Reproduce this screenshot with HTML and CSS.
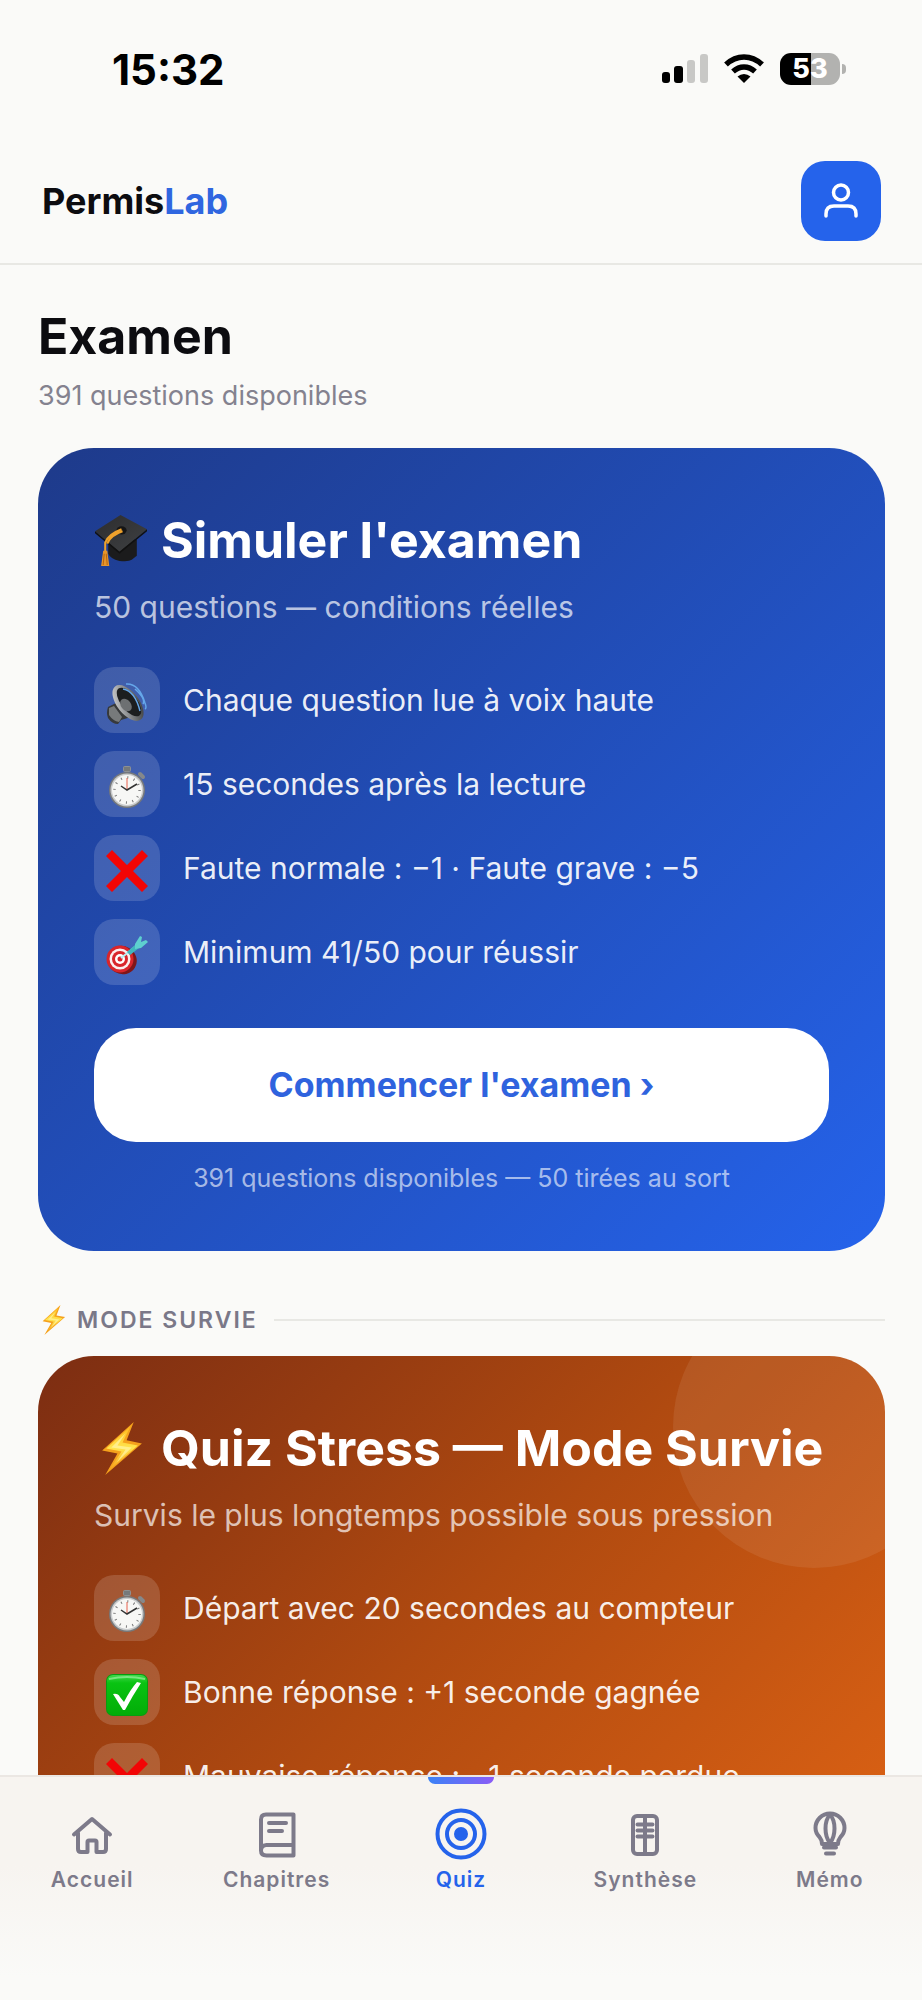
FILE: index.html
```html
<!DOCTYPE html>
<html lang="fr">
<head>
<meta charset="utf-8">
<meta name="viewport" content="width=device-width, initial-scale=1">
<title>PermisLab – Examen</title>
<link rel="stylesheet" href="styles.css">
</head>
<body>
<svg class="defs" aria-hidden="true">
  <defs>
    <linearGradient id="gold" x1="0" y1="0" x2="0" y2="1"><stop offset="0" stop-color="#ffb81c"/><stop offset=".5" stop-color="#ffe44d"/><stop offset="1" stop-color="#f6a01a"/></linearGradient>
    <linearGradient id="board" x1="0" y1="0" x2="1" y2="1"><stop offset="0" stop-color="#2c2c2e"/><stop offset="1" stop-color="#3f4143"/></linearGradient>
    <linearGradient id="metal" x1="0" y1="0" x2="1" y2="1"><stop offset="0" stop-color="#dcdcdc"/><stop offset=".5" stop-color="#85888a"/><stop offset="1" stop-color="#2b2d2e"/></linearGradient>
    <linearGradient id="green" x1="0" y1="0" x2="0" y2="1"><stop offset="0" stop-color="#3fd84a"/><stop offset=".2" stop-color="#09c312"/><stop offset="1" stop-color="#02ad08"/></linearGradient>
    <symbol id="bolt" viewBox="0 0 52 52">
      <path d="M39 0 8 28l15 3L11 52l36-31-15-3z" fill="#f5a11c"/>
      <path d="M36 4 12 26l15 3-12 18 28-24-15-3z" fill="url(#gold)"/>
      <path d="M31 11 17 25l14 2-9 13 15-15-14-2z" fill="#fff3a0" opacity=".75"/>
    </symbol>
    <symbol id="watch" viewBox="0 0 42 42">
      <rect x="17" y="0" width="8" height="6" rx="2" fill="#8d9092"/>
      <path d="M19 1v4M21 1v4M23 1v4" stroke="#5f6264" stroke-width="1"/>
      <path d="m34 8 3 3" stroke="#85888a" stroke-width="4" stroke-linecap="round"/>
      <circle cx="21" cy="24" r="18" fill="#77797b"/>
      <circle cx="21" cy="24" r="16.500" fill="#c9cbcc"/>
      <circle cx="21" cy="24" r="15" fill="#f7f7f5"/>
      <circle cx="21" cy="24" r="12.500" fill="none" stroke="#777" stroke-width="2.500" stroke-dasharray="1 5.540"/>
      <path d="M21 24V12" stroke="#e8604c" stroke-width="1"/>
      <path d="m15 20 6 4 10-6" fill="none" stroke="#333" stroke-width="1.500"/>
    </symbol>
    <symbol id="cross" viewBox="0 0 42 42">
      <path d="m0 6 6-6 15 15L36 0l6 6-15 15 15 15-6 6-15-15L6 42l-6-6 15-15z" fill="#f20505"/>
    </symbol>
    <symbol id="check" viewBox="0 0 42 42">
      <rect x="0" y="0" width="42" height="42" rx="7" fill="#089c10"/>
      <rect x="1" y="1" width="40" height="40" rx="6" fill="url(#green)"/>
      <path d="M3 5q18-4 36 0" stroke="#9bef9f" stroke-width="2" fill="none" opacity=".7"/>
      <path d="M7 20q5-1 7 3l4 5Q24 16 31 8l4 1Q27 21 19 36h-2z" fill="#fff"/>
    </symbol>
    <symbol id="cap" viewBox="0 0 52 52">
      <path d="M14 24v15q2 5 11 7 9 1 12-1l5-4V25z" fill="#1b1b1c"/>
      <path d="M26 1 1 17l24 20 27-22z" fill="url(#board)"/>
      <path d="m1 17 24 20 27-22v2L25 39 1 19z" fill="#111"/>
      <ellipse cx="27" cy="16" rx="5" ry="4" fill="#151516"/>
      <path d="M27 15Q14 20 11 28v10M28 17Q16 21 13 29" fill="none" stroke="#efa22c" stroke-width="2"/>
      <path d="M9 36h4l2 15H7z" fill="#e8952a"/>
      <path d="M10 39 9 50M12 39l1 11" stroke="#b8660f" stroke-width="1"/>
    </symbol>
    <symbol id="speaker" viewBox="0 0 42 42">
      <path d="m2 25 8-4 15 14-10 3-3 4q-6 0-10-6-2-5 0-11z" fill="#37393a"/>
      <path d="m3 26 5-2 8 11-3 5q-6-1-10-7z" fill="#777a7b"/>
      <ellipse cx="22" cy="21" rx="11" ry="21" transform="rotate(-38 22 21)" fill="url(#metal)"/>
      <ellipse cx="23" cy="20" rx="8" ry="17" transform="rotate(-38 23 20)" fill="#1c1e1f"/>
      <ellipse cx="20" cy="23" rx="5" ry="7" transform="rotate(-38 20 23)" fill="#6d7072"/>
      <path d="M17 7q12 2 17 22M20 2q13-1 19 19 2 5 0 6M29 7q11 10 8 15" fill="none" stroke="#65a7ea" stroke-width="1.500"/>
    </symbol>
    <symbol id="dart" viewBox="0 0 42 42">
      <ellipse cx="16" cy="26" rx="15" ry="14" transform="rotate(30 16 26)" fill="#7f1618"/>
      <circle cx="14" cy="25" r="13.500" fill="#d9252b"/>
      <circle cx="14" cy="25" r="10.500" fill="#fbeeee"/>
      <circle cx="14" cy="25" r="8" fill="#d9252b"/>
      <circle cx="14" cy="25" r="5" fill="#fff"/>
      <circle cx="14" cy="25" r="2.500" fill="#d9252b"/>
      <path d="M15 24 29 13" stroke="#b9eef0" stroke-width="2"/>
      <path d="m21 18 8-7 4 3-9 7z" fill="#3fb6bd"/>
      <path d="m29 10 5-8 2 1-1 5 5-2 2 2-7 6-6 1z" fill="#5ed0cf"/>
    </symbol>
  </defs>
</svg>

<div class="app">
  <div class="status">
    <span class="status-time">15:32</span>
    <div class="status-icons">
      <svg width="46" height="30" viewBox="0 0 46 30" role="img" aria-label="Réseau"><rect x="0" y="18" width="8" height="11" rx="3"/><rect x="12" y="12" width="9" height="17" rx="3"/><rect x="25" y="6" width="8" height="23" rx="3" fill="#c8c8c6"/><rect x="38" y="0" width="8" height="29" rx="3" fill="#c8c8c6"/></svg>
      <svg width="40" height="30" viewBox="0 0 40 30" role="img" aria-label="Wi-Fi"><g fill="none" stroke="#000" stroke-width="5.500"><path d="M2 10.500Q10 3 20 3t18 7.500"/><path d="M9 17.500q5-4.500 11-4.500t11 4.500"/></g><path d="M13.500 22.500q3-2.500 6.500-2.500t6.500 2.500L20 29z"/></svg>
      <div class="battery"><span class="battery-level">53</span><span class="battery-tip"></span></div>
    </div>
  </div>

  <header class="topbar">
    <a class="brand" href="#">Permis<span class="brand-accent">Lab</span></a>
    <button class="avatar" type="button" aria-label="Profil">
      <svg width="40" height="40" viewBox="0 0 40 40" fill="none" stroke="#fff" stroke-width="3.500" stroke-linecap="round"><circle cx="20" cy="11.500" r="7.500"/><path d="M5 35v-2q0-8 8-8h14q8 0 8 8v2"/></svg>
    </button>
  </header>

  <main class="content">
    <div class="heading">
      <h1>Examen</h1>
      <p>391 questions disponibles</p>
    </div>

    <section class="card card-blue">
      <h2 class="card-title"><svg class="title-icon"><use href="#cap"/></svg>Simuler l'examen</h2>
      <p class="card-sub">50 questions — conditions réelles</p>
      <ul class="rules">
        <li><span class="tile"><svg><use href="#speaker"/></svg></span>Chaque question lue à voix haute</li>
        <li><span class="tile"><svg><use href="#watch"/></svg></span>15 secondes après la lecture</li>
        <li><span class="tile"><svg><use href="#cross"/></svg></span>Faute normale : −1 · Faute grave : −5</li>
        <li><span class="tile"><svg><use href="#dart"/></svg></span>Minimum 41/50 pour réussir</li>
      </ul>
      <button class="start" type="button">Commencer l'examen ›</button>
      <p class="card-note">391 questions disponibles — 50 tirées au sort</p>
    </section>

    <div class="divider"><svg class="divider-icon"><use href="#bolt"/></svg><h3>MODE SURVIE</h3><span class="rule"></span></div>

    <section class="card card-orange">
      <h2 class="card-title"><svg class="title-icon"><use href="#bolt"/></svg>Quiz Stress — Mode Survie</h2>
      <p class="card-sub">Survis le plus longtemps possible sous pression</p>
      <ul class="rules">
        <li><span class="tile"><svg><use href="#watch"/></svg></span>Départ avec 20 secondes au compteur</li>
        <li><span class="tile"><svg><use href="#check"/></svg></span>Bonne réponse : +1 seconde gagnée</li>
        <li><span class="tile"><svg><use href="#cross"/></svg></span>Mauvaise réponse : −1 seconde perdue</li>
      </ul>
    </section>
  </main>

  <nav class="tabs">
    <a href="#"><svg viewBox="0 0 56 56"><path d="M10 28.500 28 13l18 15.500"/><path d="M14 27v16q0 3 3 3h6.500V36q0-1.500 1.500-1.500h6q1.500 0 1.500 1.500v10H39q3 0 3-3V27"/></svg>Accueil</a>
    <a href="#"><svg viewBox="0 0 56 56"><path d="M44.500 39V8.500H17q-5 0-5 5V44M44.500 39v10.500H17.500q-5.500 0-5.500-5t5.500-5.500z"/><path d="M20 17h17M20 25h13"/></svg>Chapitres</a>
    <a href="#" class="active" aria-current="page"><svg viewBox="0 0 56 56"><circle cx="28" cy="28" r="23.500"/><circle cx="28" cy="28" r="14"/><circle cx="28" cy="28" r="5" fill="currentColor"/></svg>Quiz</a>
    <a href="#"><svg viewBox="0 0 56 56"><rect x="16" y="10" width="24" height="38" rx="4"/><path d="M28 10v38M20.500 18.500h15M20.500 24.500h15M20.500 30.500h15"/></svg>Synthèse</a>
    <a href="#"><svg viewBox="0 0 56 56"><path d="M20 38q0-4-2.500-7Q13.500 27 13.500 22a14.500 14.500 0 0 1 29 0q0 5-4 9-2.500 3-2.500 7z"/><path d="M28 8.500q-4.500 5-4.500 14T28 37q4.500-5.500 4.500-14.500T28 8.500zM22 41.500h12M24 47.500h8"/></svg>Mémo</a>
  </nav>
</div>
</body>
</html>
```
FILE: styles.css
```css
* { box-sizing: border-box; }

body {
  margin: 0;
  background: #fafaf8;
  color: #0c0c10;
  font-family: Inter, "Liberation Sans", sans-serif;
}

h1, h2, h3, p, ul { margin: 0; padding: 0; }
a { color: inherit; text-decoration: none; }
button { border: 0; font: inherit; cursor: pointer; }

.defs { display: block; width: 0; height: 0; }

.app { display: flex; flex-direction: column; height: 100vh; }

/* status bar */
.status {
  display: flex;
  justify-content: space-between;
  align-items: center;
  height: 138px;
  padding: 0 76px 0 112px;
}
.status-time { color: #000; font-size: 42px; font-weight: 700; }
.status-icons { display: flex; align-items: center; gap: 16px; }
.status-icons svg { display: block; }
.battery { display: flex; align-items: center; gap: 2px; }
.battery-level {
  width: 60px;
  border-radius: 11px;
  background: linear-gradient(90deg, #000 52%, #b2b2b0 52%);
  color: #fff;
  font-size: 27px;
  font-weight: 800;
  line-height: 32px;
  text-align: center;
}
.battery-tip { width: 4px; height: 10px; border-radius: 0 5px 5px 0; background: #b2b2b0; }

/* header */
.topbar {
  display: flex;
  justify-content: space-between;
  align-items: center;
  padding: 23px 41px 22px 42px;
  border-bottom: 2px solid #e8e8e4;
}
.brand { font-size: 36px; font-weight: 700; }
.brand-accent { color: #2f66e0; }
.avatar {
  display: grid;
  place-items: center;
  width: 80px;
  height: 80px;
  padding: 0;
  border-radius: 24px;
  background: #2563eb;
}

/* content */
.content {
  flex: 1;
  min-height: 0;
  padding: 40px 37px 0 38px;
  overflow-y: auto;
  scrollbar-width: none;
}
.heading { margin-bottom: 33px; }
.heading h1 { font-size: 50px; font-weight: 700; line-height: 62px; }
.heading p { margin-top: 10px; color: #84828f; font-size: 27px; line-height: 38px; }

.card {
  position: relative;
  padding: 56px;
  border-radius: 56px;
  overflow: hidden;
  color: #fff;
}
.card-blue { background: linear-gradient(135deg, #1e3a8a, #2563eb); }
.card-orange { background: linear-gradient(135deg, #7c2d12, #b04a10 50%, #dc6214); }
.card-orange::before {
  content: "";
  position: absolute;
  top: -70px;
  right: -70px;
  width: 282px;
  height: 282px;
  border-radius: 50%;
  background: rgba(255, 255, 255, 0.08);
}
.card-title {
  display: flex;
  align-items: center;
  gap: 14px;
  font-size: 50px;
  font-weight: 700;
  line-height: 72px;
  white-space: nowrap;
}
.title-icon { flex: none; width: 53px; height: 53px; }
.card-sub { margin-top: 12px; color: rgba(255, 255, 255, 0.7); font-size: 30px; line-height: 38px; }

.rules { display: flex; flex-direction: column; gap: 18px; margin-top: 41px; list-style: none; }
.rules li { display: flex; align-items: center; gap: 23px; color: rgba(255, 255, 255, 0.92); font-size: 30px; }
.tile {
  display: grid;
  flex: none;
  place-items: center;
  width: 66px;
  height: 66px;
  padding-top: 6px;
  border-radius: 20px;
  background: rgba(255, 255, 255, 0.15);
}
.tile svg { width: 42px; height: 42px; }

.start {
  width: 100%;
  margin-top: 43px;
  border-radius: 42px;
  background: #fff;
  color: #2f63de;
  font-size: 34px;
  font-weight: 700;
  line-height: 112px;
}
.card-note { margin-top: 19px; color: rgba(255, 255, 255, 0.62); font-size: 25px; line-height: 34px; text-align: center; }

.divider { display: flex; align-items: center; margin: 51px 0 18px; }
.divider-icon { width: 30px; height: 30px; }
.divider h3 {
  margin: 0 16px 0 9px;
  color: #7a7888;
  font-size: 23px;
  font-weight: 600;
  line-height: 36px;
  letter-spacing: 2px;
}
.rule { flex: 1; height: 2px; background: #e8e8e4; }

/* bottom tabs */
.tabs {
  display: grid;
  grid-template-columns: repeat(5, 1fr);
  padding-bottom: 104px;
  border-top: 2px solid #ebe7e3;
  background: linear-gradient(#f7f4f0 40%, #fafaf8 90%);
}
.tabs a {
  position: relative;
  display: flex;
  flex-direction: column;
  align-items: center;
  gap: 2px;
  padding-top: 29px;
  color: #7d7a8a;
  font-size: 21px;
  font-weight: 600;
  line-height: 32px;
  letter-spacing: 1px;
}
.tabs svg {
  width: 56px;
  height: 56px;
  fill: none;
  stroke: currentColor;
  stroke-width: 4;
  stroke-linecap: round;
  stroke-linejoin: round;
}
.tabs .active { color: #2563eb; }
.tabs .active::before {
  content: "";
  position: absolute;
  top: 0;
  width: 66px;
  height: 7px;
  border-radius: 0 0 7px 7px;
  background: linear-gradient(90deg, #3b82f6, #8b5cf6);
}
```
